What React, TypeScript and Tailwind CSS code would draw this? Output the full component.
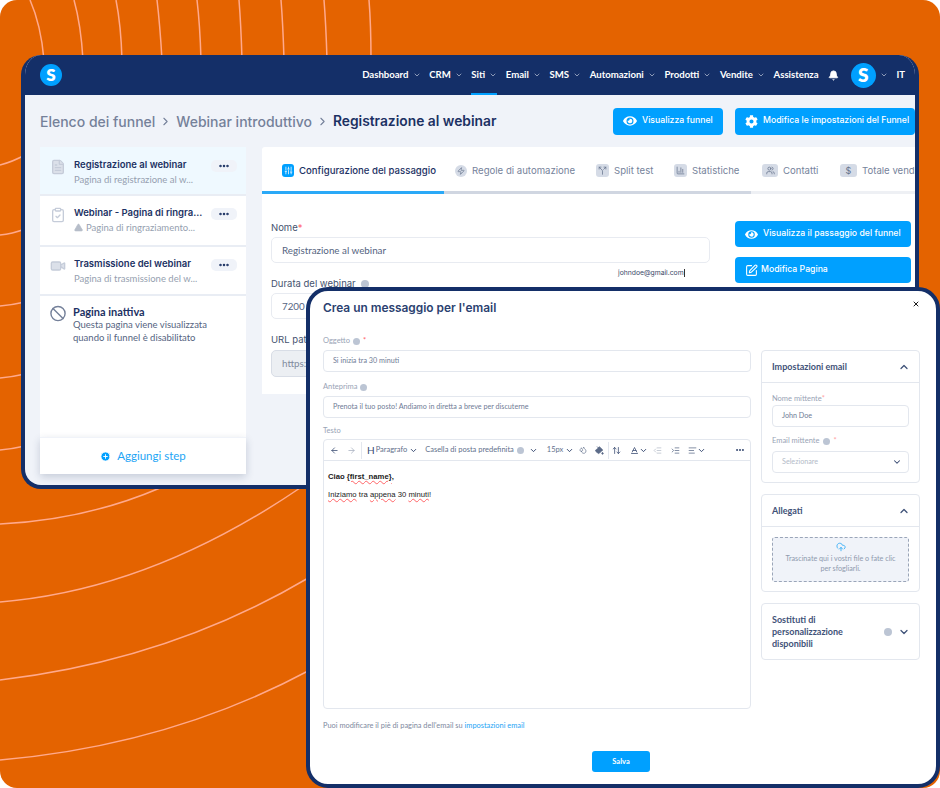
import React from 'react';
import {
  SquarePen, Bell, ChevronDown, ChevronUp, ChevronRight, Ellipsis, ArrowLeft, ArrowRight,
  PaintBucket, Baseline, IndentDecrease, IndentIncrease, AlignLeft, CloudUpload, X, Zap,
  FileText, ClipboardCheck, Video, Ban, CirclePlus, TriangleAlert, SlidersVertical, Split,
  ChartColumn, Users, Droplets, ArrowUpDown,
} from 'lucide-react';
import { FaCog, FaEye } from 'react-icons/fa';

const NAV = [
  { label: 'Dashboard', caret: true }, { label: 'CRM', caret: true }, { label: 'Siti', caret: true, active: true },
  { label: 'Email', caret: true }, { label: 'SMS', caret: true }, { label: 'Automazioni', caret: true },
  { label: 'Prodotti', caret: true }, { label: 'Vendite', caret: true }, { label: 'Assistenza', caret: false },
];

const LINES = [
  'M30 0Q41 25 44 60', 'M74 0Q81 25 83 60', 'M116 0Q121 25 122 60', 'M157 0Q160 25 162 60',
  'M197 0Q200 25 201 60', 'M239 0Q241 25 242 60', 'M281 0Q283 25 284 60', 'M324 0Q326 25 327 60', 'M369 0Q371 25 371 60',
  'M0 165Q12 162 25 155', 'M0 235Q12 234 25 229', 'M0 306Q12 305 25 302', 'M0 378Q12 377 25 374', 'M0 450Q12 449 25 446',
  'M0 524Q85 520 160 488', 'M0 602Q150 590 300 488', 'M0 680Q170 660 310 577', 'M0 760Q170 745 310 670',
];

function Logo({ size }: { size: string }) {
  return (
    <div className={`${size} rounded-full bg-[#00a0ff] flex items-center justify-center text-white font-extrabold [font-family:Lato,sans-serif]`}>
      S
    </div>
  );
}

function BlueButton({ icon, label, className }: { icon: React.ReactNode; label: string; className: string }) {
  return (
    <div className={`h-[27px] rounded-[4px] bg-[#00a0ff] text-white text-[8.7px] font-medium flex items-center gap-[5px] shrink-0 ${className}`}>
      {icon}
      <span className="whitespace-nowrap">{label}</span>
    </div>
  );
}

function SideItem({ icon, title, sub, warn, active, h, pad }: { icon: React.ReactNode; title: string; sub: string; warn?: boolean; active?: boolean; h: string; pad: string }) {
  return (
    <div className={`${h} ${pad} flex pl-[10px] pr-[9px] border-b-2 border-[#e9edf4] ${active ? 'bg-[#eff9ff]' : 'bg-white'}`}>
      <div className="w-[24px] pt-[1px] text-[#c5ccd9] shrink-0">{icon}</div>
      <div className="flex-1 min-w-0">
        <p className="text-[9.5px] font-semibold leading-[14px] text-[#1c3163] whitespace-nowrap">{title}</p>
        <p className="text-[9.5px] mt-[1px] leading-[13px] text-[#969fb0] whitespace-nowrap flex items-center gap-[3px] [font-family:Lato,sans-serif]">
          {warn && <TriangleAlert size={9} className="fill-[#b6bdc9] text-[#b6bdc9]" />}
          {sub}
        </p>
      </div>
      <div className="w-[26px] h-[12px] mt-[2px] rounded-[5px] bg-[#f0f3f9] flex items-center justify-center shrink-0">
        <Ellipsis size={12} strokeWidth={3} className="text-[#1c3163]" />
      </div>
    </div>
  );
}

function Tab({ icon, label, active, w }: { icon: React.ReactNode; label: string; active?: boolean; w: string }) {
  return (
    <div className={`${w} flex items-center gap-[5px] shrink-0`}>
      {icon}
      <span className={`text-[9.6px] whitespace-nowrap ${active ? 'text-[#1c3163] font-medium' : 'text-[#76839b]'}`}>{label}</span>
    </div>
  );
}

function TabIcon({ children, w = 'w-[13px]' }: { children: React.ReactNode; w?: string }) {
  return <span className={`${w} h-[13px] rounded-[3px] bg-[#d5dbe6] text-[#65738c] flex items-center justify-center shrink-0`}>{children}</span>;
}

function Info({ size = 'w-[8px] h-[8px]' }: { size?: string }) {
  return <span className={`${size} rounded-full bg-[#bcc5d4] inline-block shrink-0`} />;
}

function SmallLabel({ children, className = '' }: { children: React.ReactNode; className?: string }) {
  return <p className={`text-[7.5px] leading-[10px] text-[#99a3b5] flex items-center gap-[3px] ${className}`}>{children}</p>;
}

function ModalInput({ value, className = '' }: { value: string; className?: string }) {
  return (
    <div className={`h-[22px] rounded-[4px] border border-[#e3e7ee] px-[9px] flex items-center text-[7.2px] text-[#6f7c96] ${className}`}>
      {value}
    </div>
  );
}

function FormInput({ value }: { value: string }) {
  return (
    <div className="h-[26px] rounded-[5px] border border-[#e8ebf1] flex items-center pl-[10px] text-[9.8px] text-[#55647f] [font-family:Lato,sans-serif]">
      {value}
    </div>
  );
}

export default function App() {
  const spell = 'underline decoration-wavy decoration-red-400 decoration-[0.5px]';
  return (
    <div className="relative w-[940px] h-[788px] overflow-hidden bg-white [font-family:Inter,sans-serif]">
      <div className="absolute inset-0 rounded-[17px] bg-[#e46300]" />
      <svg className="absolute inset-0" width="940" height="788" fill="none" stroke="#ffa98c" strokeWidth="1.5">
        {LINES.map(d => <path key={d} d={d} />)}
      </svg>

      {/* Funnel window */}
      <div className="absolute left-[21px] top-[55px] w-[898px] h-[434px] rounded-[20px] bg-[#f0f3f9] border-4 border-t-0 border-[#142f68] overflow-hidden flex flex-col">
        <div className="h-[40px] bg-[#142f68] flex items-center pl-[15px] shrink-0">
          <Logo size="w-[22px] h-[22px] text-[17px]" />
          <div className="ml-auto flex items-center h-full gap-[8.6px] text-white text-[9.6px] font-bold [font-family:Lato,sans-serif]">
            {NAV.map(n => (
              <div key={n.label} className={`h-full flex items-center gap-[4px] border-b-2 pt-[2px] ${n.active ? 'border-[#00a0ff]' : 'border-transparent'}`}>
                <span className="whitespace-nowrap">{n.label}</span>
                {n.caret && <ChevronDown size={8} className="text-[#c8d0e0]" />}
              </div>
            ))}
            <Bell size={11} className="ml-[1px] fill-white text-white" />
            <div className="flex items-center gap-[4px] ml-[3px]">
              <Logo size="w-[25px] h-[25px] text-[19px]" />
              <ChevronDown size={8} className="text-[#c8d0e0]" />
            </div>
            <span className="mr-[10px]">IT</span>
          </div>
        </div>

        <div className="h-[52px] flex items-center pl-[15px] shrink-0">
          <div className="flex items-center gap-[4px] text-[14px] font-medium text-[#75819a] whitespace-nowrap">
            <span>Elenco dei funnel</span>
            <ChevronRight size={13} />
            <span>Webinar introduttivo</span>
            <ChevronRight size={13} />
            <span className="text-[13.8px] text-[#1c3163] font-semibold">Registrazione al webinar</span>
          </div>
          <div className="ml-auto flex gap-[12px] shrink-0">
            <BlueButton icon={<FaEye size={14} className="shrink-0" />} label="Visualizza funnel" className="w-[110px] pl-[10px]" />
            <BlueButton icon={<FaCog size={13} className="shrink-0" />} label="Modifica le impostazioni del Funnel" className="w-[180px] pl-[10px]" />
          </div>
        </div>

        <div className="flex flex-1 min-h-0 pl-[15px] gap-[16px]">
          <div className="w-[206px] h-[327px] bg-white flex flex-col shrink-0">
            <SideItem h="h-[49px]" pad="pt-[11px]" active icon={<FileText size={16} className="fill-[#dbe0e9]" />} title="Registrazione al webinar" sub="Pagina di registrazione al w..." />
            <SideItem h="h-[51px]" pad="pt-[10px]" warn icon={<ClipboardCheck size={16} />} title="Webinar - Pagina di ringra..." sub="Pagina di ringraziamento..." />
            <SideItem h="h-[49px]" pad="pt-[10px]" icon={<Video size={16} className="fill-[#dbe0e9]" />} title="Trasmissione del webinar" sub="Pagina di trasmissione del w..." />
            <div className="flex-1 flex pl-[10px] pt-[9px]">
              <Ban size={17} className="text-[#75819a] w-[24px] shrink-0 -ml-[4px] mr-[3px]" />
              <div className="[font-family:Lato,sans-serif]">
                <p className="text-[11px] font-bold leading-[13px] text-[#1c3163]">Pagina inattiva</p>
                <p className="text-[9.5px] leading-[12.5px] mt-[1px] text-[#55647f]">Questa pagina viene visualizzata<br />quando il funnel è disabilitato</p>
              </div>
            </div>
            <div className="h-[37px] flex items-center justify-center gap-[6px] text-[#1ea5f5] text-[11.5px] border-t border-[#f0f3f9] shadow-[0_3px_8px_rgba(30,50,90,0.2)] [font-family:Lato,sans-serif]">
              <CirclePlus size={11} className="fill-[#00a0ff] text-white" />
              Aggiungi step
            </div>
          </div>

          <div className="w-[653px] h-[247px] bg-white rounded-tl-[3px] shrink-0 overflow-hidden">
            <div className="h-[44px] flex items-center pl-[20px] pt-[4px]">
              <Tab w="w-[173px]" active label="Configurazione del passaggio" icon={<span className="w-[12px] h-[13px] rounded-[3px] bg-[#00a0ff] text-white flex items-center justify-center shrink-0"><SlidersVertical size={9} /></span>} />
              <Tab w="w-[141px]" label="Regole di automazione" icon={<span className="w-[12px] h-[12px] rounded-full bg-[#d5dbe6] text-[#65738c] flex items-center justify-center shrink-0"><Zap size={8} /></span>} />
              <Tab w="w-[78px]" label="Split test" icon={<TabIcon><Split size={9} /></TabIcon>} />
              <Tab w="w-[88px]" label="Statistiche" icon={<TabIcon><ChartColumn size={9} /></TabIcon>} />
              <Tab w="w-[78px]" label="Contatti" icon={<TabIcon w="w-[16px]"><Users size={9} /></TabIcon>} />
              <Tab w="w-[80px]" label="Totale vendite" icon={<TabIcon w="w-[17px]"><span className="text-[9px]">$</span></TabIcon>} />
            </div>
            <div className="flex h-[3px]">
              <div className="w-[182px] bg-[#2aa9f7]" />
              <div className="w-[307px] bg-[#d0d6e1]" />
              <div className="flex-1 bg-[#eef0f4]" />
            </div>
            <div className="flex pt-[27px] pl-[9px]">
              <div className="w-[439px] shrink-0">
                <p className="text-[9.5px] leading-[14px] text-[#45536f] mb-[2px]">Nome<span className="text-red-400">*</span></p>
                <FormInput value="Registrazione al webinar" />
                <p className="text-[9.5px] leading-[14px] text-[#45536f] mt-[14px] mb-[2px] flex items-center gap-[5px]">Durata del webinar <Info /></p>
                <FormInput value="7200" />
                <p className="text-[9.5px] leading-[14px] text-[#45536f] mt-[14px] mb-[3px]">URL path</p>
                <div className="h-[27px] rounded-[5px] border border-[#d8dde6] bg-[#eceff3] flex items-center pl-[10px] text-[9.8px] text-[#7f8a9e] [font-family:Lato,sans-serif]">https://</div>
              </div>
              <div className="ml-[25px] w-[176px] flex flex-col gap-[10px]">
                <BlueButton icon={<FaEye size={13} className="shrink-0" />} label="Visualizza il passaggio del funnel" className="w-[176px] pl-[10px] !h-[26px]" />
                <BlueButton icon={<SquarePen size={13} className="shrink-0" />} label="Modifica Pagina" className="w-[176px] pl-[10px] !h-[26px] !gap-[3px]" />
              </div>
            </div>
          </div>
        </div>
      </div>

      {/* Typed address floating over the form */}
      <div className="absolute left-[616px] top-[267px] w-[80px] h-[12px] bg-white/80 flex items-center pl-[2px] text-[6.8px] text-[#3b4a69]">
        johndoe@gmail.com<span className="w-px h-[8px] bg-[#333]" />
      </div>

      {/* Email window */}
      <div className="absolute left-[306px] top-[287px] w-[634px] h-[501px] rounded-[22px] bg-white border-[4px] border-[#142f68] flex flex-col pl-[13px] pr-[15px]">
        <div className="h-[34px] flex items-center relative shrink-0">
          <h2 className="text-[11.9px] font-semibold text-[#2b4170]">Crea un messaggio per l'email</h2>
          <X size={8} strokeWidth={3} className="absolute right-[1px] top-[9px] text-[#1a1a1a]" />
        </div>
        <div className="flex gap-[10px] pt-[11px] flex-1 min-h-0 [font-family:Lato,sans-serif]">
          <div className="w-[428px] shrink-0 flex flex-col">
            <SmallLabel className="mb-[4px]">Oggetto <Info size="w-[7px] h-[7px]" /> <span className="text-red-400">*</span></SmallLabel>
            <ModalInput value="Si inizia tra 30 minuti" />
            <SmallLabel className="mt-[10px] mb-[4px]">Anteprima <Info size="w-[7px] h-[7px]" /></SmallLabel>
            <ModalInput value="Prenota il tuo posto! Andiamo in diretta a breve per discuterne" />
            <SmallLabel className="mt-[8px] mb-[3px]">Testo</SmallLabel>
            <div className="h-[270px] rounded-[4px] border border-[#e3e7ee] flex flex-col">
              <div className="h-[21px] border-b border-[#e3e7ee] flex items-center text-[7.5px] text-[#62708c] whitespace-nowrap shrink-0">
                <ArrowLeft size={9} className="ml-[6px] text-[#34476f]" />
                <ArrowRight size={9} className="ml-[8px] text-[#a5aebd]" />
                <span className="w-px h-[17px] bg-[#e3e7ee] ml-[5px]" />
                <span className="ml-[5px] text-[10px] text-[#34476f] leading-none">H</span>
                <span className="ml-[1px]">Paragrafo</span>
                <ChevronDown size={9} strokeWidth={2.5} className="ml-[2px] text-[#34476f]" />
                <span className="ml-[7px]">Casella di posta predefinita</span>
                <Info size="w-[7px] h-[7px] ml-[3px]" />
                <ChevronDown size={9} strokeWidth={2.5} className="ml-[5px] text-[#34476f]" />
                <span className="ml-[9px]">15px</span>
                <ChevronDown size={9} strokeWidth={2.5} className="ml-[2px] text-[#34476f]" />
                <Droplets size={8} className="ml-[5px] text-[#5c6b88]" />
                <PaintBucket size={9} className="ml-[8px] fill-[#5c6b88] text-[#5c6b88]" />
                <span className="w-px h-[17px] bg-[#e3e7ee] ml-[4px]" />
                <ArrowUpDown size={9} className="ml-[3px] text-[#34476f]" />
                <Baseline size={9} className="ml-[9px] text-[#34476f]" />
                <ChevronDown size={9} strokeWidth={2.5} className="text-[#34476f]" />
                <IndentDecrease size={9} className="ml-[5px] text-[#b5bdca]" />
                <IndentIncrease size={9} className="ml-[9px] text-[#5c6b88]" />
                <AlignLeft size={9} className="ml-[8px] text-[#5c6b88]" />
                <ChevronDown size={9} strokeWidth={2.5} className="text-[#34476f]" />
                <Ellipsis size={10} strokeWidth={3} className="ml-auto mr-[5px] text-[#34476f]" />
              </div>
              <div className="px-[4px] pt-[10px] text-[7.7px] text-[#222] [font-family:'Liberation_Sans',sans-serif]">
                <p className="font-bold leading-[12px]">Ciao <span className={spell}>{'{first_name}'}</span>,</p>
                <p className="mt-[6px] leading-[12px]"><span className={spell}>Iniziamo</span> tra <span className={spell}>appena</span> 30 <span className={spell}>minuti</span>!</p>
              </div>
            </div>
            <p className="mt-[12px] text-[7.4px] leading-[10px] text-[#7e899e]">Puoi modificare il piè di pagina dell'email su <span className="text-[#1ea5f5]">impostazioni email</span></p>
          </div>

          <div className="w-[159px] shrink-0 flex flex-col gap-[11px] mt-[14px]">
            <div className="h-[133px] rounded-[4px] border border-[#e3e7ee] flex flex-col">
              <div className="h-[32px] flex items-center justify-between pl-[10px] pr-[9px] border-b border-[#e3e7ee] text-[9px] font-bold text-[#3f5278]">
                Impostazioni email
                <ChevronUp size={12} strokeWidth={2.5} />
              </div>
              <div className="px-[10px] pt-[11px]">
                <SmallLabel className="mb-[1px] !gap-0">Nome mittente<span className="text-red-300">*</span></SmallLabel>
                <ModalInput value="John Doe" />
                <SmallLabel className="mt-[9px] mb-[5px]">Email mittente <Info size="w-[7px] h-[7px] ml-[1px]" /> <span className="text-red-300">*</span></SmallLabel>
                <div className="h-[22px] rounded-[4px] border border-[#e3e7ee] pl-[9px] pr-[6px] flex items-center justify-between text-[7.2px] text-[#b3bbc8]">
                  Selezionare
                  <ChevronDown size={10} strokeWidth={2.5} className="text-[#34476f]" />
                </div>
              </div>
            </div>

            <div className="h-[98px] rounded-[4px] border border-[#e3e7ee] flex flex-col">
              <div className="h-[32px] flex items-center justify-between pl-[10px] pr-[9px] border-b border-[#e3e7ee] text-[9px] font-bold text-[#3f5278]">
                Allegati
                <ChevronUp size={12} strokeWidth={2.5} />
              </div>
              <div className="mx-[10px] mt-[10px] h-[45px] rounded-[3px] border border-dashed border-[#9aa5b8] bg-[#f0f3f9] flex flex-col items-center pt-[4px] text-[7.2px] leading-[10px] text-[#8f9aae] text-center">
                <CloudUpload size={10} className="text-[#2aa9f7] mb-[2px]" />
                <span>Trascinate qui i vostri file o fate clic<br />per sfogliarli.</span>
              </div>
            </div>

            <div className="h-[57px] rounded-[4px] border border-[#e3e7ee] flex items-center pl-[10px] pr-[9px] text-[9px] leading-[12px] font-bold text-[#3f5278]">
              <span className="w-[108px]">Sostituti di<br />personalizzazione<br />disponibili</span>
              <Info size="w-[8px] h-[8px] ml-[4px]" />
              <ChevronDown size={12} strokeWidth={2.5} className="ml-auto" />
            </div>
          </div>
        </div>
        <div className="h-[33px] pb-[12px] pr-[2px] flex justify-center shrink-0">
          <div className="w-[58px] h-[21px] rounded-[3px] bg-[#00a0ff] text-white text-[7.5px] font-bold flex items-center justify-center [font-family:Lato,sans-serif]">Salva</div>
        </div>
      </div>
    </div>
  );
}
